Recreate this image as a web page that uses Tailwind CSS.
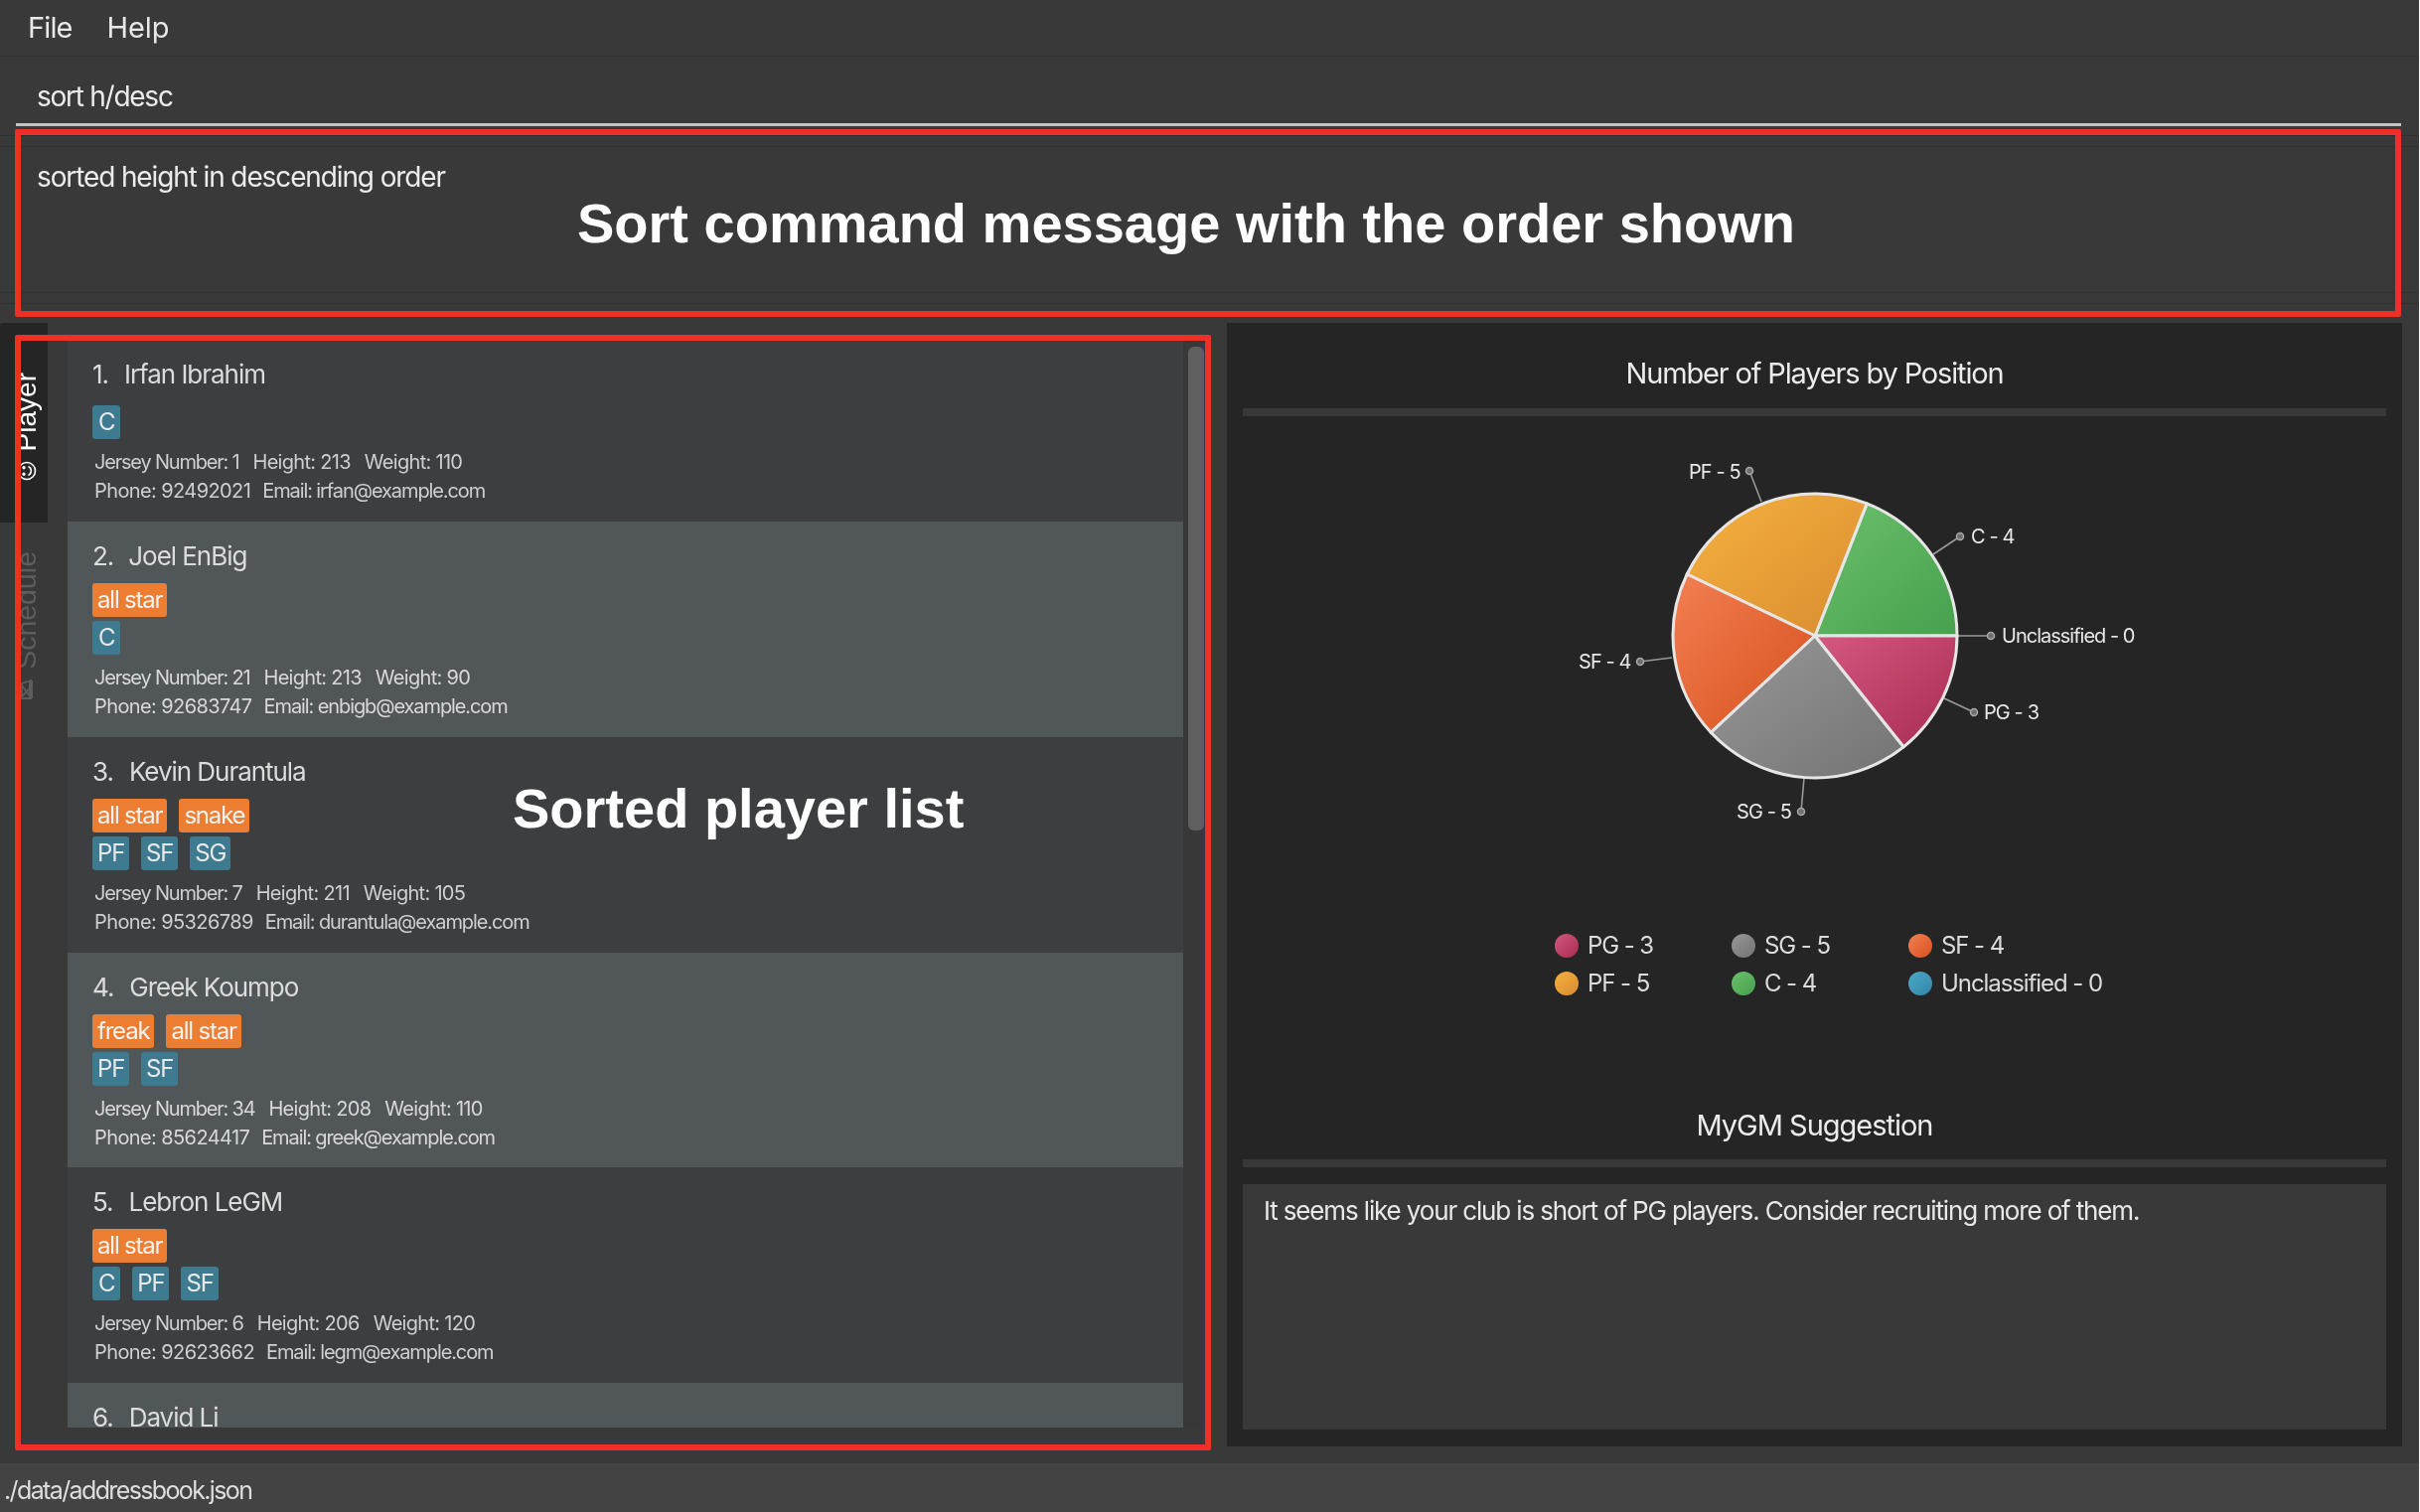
<!DOCTYPE html>
<html lang="en">
<head>
<meta charset="utf-8">
<title>MyGM</title>
<script src="https://cdn.jsdelivr.net/npm/@tailwindcss/browser@4"></script>
</head>
<body class="bg-white overflow-hidden w-[2436px] h-[1522px] relative font-['Inter',sans-serif]">
<div class="w-[2435px] h-[1522px] bg-[#393939] flex flex-col blur-[0.6px]">

  <!-- menu -->
  <div class="h-[57px] shrink-0 border-b border-[#333333] flex items-center pl-[28px] gap-[35px] text-[29px] tracking-[-0.03em] text-[#e8e8e8]">
    <span>File</span><span class="tracking-[-0.005em]">Help</span>
  </div>

  <!-- command -->
  <div class="h-[80px] shrink-0 border-b border-[#303030] px-[16px] pt-[19px] text-[#ececec]">
    <div class="w-[2401px] h-[51px] border-b-[3px] border-[#c4c4c4] pl-[21px] text-[28px] leading-[42px] tracking-[-0.045em]">sort h/desc</div>
  </div>

  <!-- result -->
  <div class="h-[169px] shrink-0 border-b border-[#303030] pt-[10px]">
    <div class="h-[148px] border-y border-[#313131] pl-[37px] pt-[10px] text-[28px] leading-[40px] tracking-[-0.04em] text-[#ececec]">sorted height in descending order</div>
  </div>

  <!-- main row -->
  <div class="h-[1131px] mt-[19px] shrink-0 flex">
    <!-- tabs -->
    <div class="w-[48px] shrink-0 flex flex-col">
      <div class="h-[201px] bg-[#252525] rounded-tl-[3px] flex flex-col items-center pl-[6px] pt-[50px] gap-[10px] text-white">
        <span class="[writing-mode:vertical-rl] rotate-180 font-['Liberation_Sans',sans-serif] text-[28px] leading-[28px]">Player</span>
        <svg class="w-[20px] h-[20px]" viewBox="0 0 20 20" fill="none" stroke="currentColor" stroke-width="1.6"><circle cx="10" cy="10" r="8.5"/><circle cx="7" cy="6.8" r="0.9" fill="currentColor"/><circle cx="7" cy="13.2" r="0.9" fill="currentColor"/><path d="M11.5 5.5a5 5 0 0 1 0 9"/></svg>
      </div>
      <div class="flex flex-col items-center pl-[4px] pt-[29px] gap-[9px] text-[#5d5d5d]">
        <span class="[writing-mode:vertical-rl] rotate-180 font-['Liberation_Sans',sans-serif] text-[28.5px] leading-[28px]">Schedule</span>
        <svg class="w-[16px] h-[24px]" viewBox="0 0 16 24" fill="none" stroke="currentColor" stroke-width="1.8"><path d="M13 2L4 5v15h9z"/><path d="M13 2v18" stroke-width="4"/><path d="M4 7l8 11M4 18l8-8"/></svg>
      </div>
    </div>

    <!-- list -->
    <div class="ml-[20px] mt-[17px] h-[1095px] flex shrink-0">
      <div class="w-[1123px] h-[1095px] overflow-hidden text-[#dcdcdc]">

        <div class="h-[183px] bg-[#3c3e3f] pl-[25px] pt-[17px]">
          <div class="h-[36px] leading-[36px] text-[26px] tracking-[-0.04em] flex gap-[16px]"><span>1.</span><span>Irfan Ibrahim</span></div>
          <div class="mt-[13px] flex gap-[12px]"><span class="h-[34px] px-[6px] rounded-[3px] bg-[#3e7b91] text-[#e8e8e8] text-[24px] leading-[34px] tracking-[-0.05em]">C</span></div>
          <div class="mt-[9px] pl-[2px] flex gap-[14px] h-[29px] leading-[29px] text-[20px] tracking-[-0.035em] text-[#cfcfcf]"><span class="tracking-[-0.06em]">Jersey Number: 1</span><span>Height: 213</span><span>Weight: 110</span></div>
          <div class="pl-[2px] flex gap-[12px] h-[29px] leading-[29px] text-[20px] tracking-[-0.055em] text-[#cfcfcf]"><span class="tracking-[-0.03em]">Phone: 92492021</span><span>Email: irfan@example.com</span></div>
        </div>

        <div class="h-[217px] bg-[#515658] pl-[25px] pt-[17px]">
          <div class="h-[36px] leading-[36px] text-[26px] tracking-[-0.04em] flex gap-[15px]"><span>2.</span><span>Joel EnBig</span></div>
          <div class="mt-[9px] flex gap-[12px]"><span class="h-[34px] px-[5px] rounded-[3px] bg-[#ed7d31] text-[#f3f3f3] text-[24px] leading-[34px] tracking-[-0.05em]">all star</span></div>
          <div class="mt-[4px] flex gap-[12px]"><span class="h-[34px] px-[6px] rounded-[3px] bg-[#3e7b91] text-[#e8e8e8] text-[24px] leading-[34px] tracking-[-0.05em]">C</span></div>
          <div class="mt-[9px] pl-[2px] flex gap-[14px] h-[29px] leading-[29px] text-[20px] tracking-[-0.035em] text-[#d8d8d8]"><span class="tracking-[-0.06em]">Jersey Number: 21</span><span>Height: 213</span><span>Weight: 90</span></div>
          <div class="pl-[2px] flex gap-[12px] h-[29px] leading-[29px] text-[20px] tracking-[-0.055em] text-[#d8d8d8]"><span class="tracking-[-0.03em]">Phone: 92683747</span><span>Email: enbigb@example.com</span></div>
        </div>

        <div class="h-[217px] bg-[#3c3e3f] pl-[25px] pt-[17px]">
          <div class="h-[36px] leading-[36px] text-[26px] tracking-[-0.04em] flex gap-[16px]"><span>3.</span><span>Kevin Durantula</span></div>
          <div class="mt-[9px] flex gap-[12px]"><span class="h-[34px] px-[5px] rounded-[3px] bg-[#ed7d31] text-[#f3f3f3] text-[24px] leading-[34px] tracking-[-0.05em]">all star</span><span class="h-[34px] px-[5px] rounded-[3px] bg-[#ed7d31] text-[#f3f3f3] text-[24px] leading-[34px] tracking-[-0.05em]">snake</span></div>
          <div class="mt-[4px] flex gap-[12px]"><span class="h-[34px] px-[5px] rounded-[3px] bg-[#3e7b91] text-[#e8e8e8] text-[24px] leading-[34px] tracking-[-0.05em]">PF</span><span class="h-[34px] px-[5px] rounded-[3px] bg-[#3e7b91] text-[#e8e8e8] text-[24px] leading-[34px] tracking-[-0.05em]">SF</span><span class="h-[34px] px-[5px] rounded-[3px] bg-[#3e7b91] text-[#e8e8e8] text-[24px] leading-[34px] tracking-[-0.05em]">SG</span></div>
          <div class="mt-[9px] pl-[2px] flex gap-[14px] h-[29px] leading-[29px] text-[20px] tracking-[-0.035em] text-[#cfcfcf]"><span class="tracking-[-0.06em]">Jersey Number: 7</span><span>Height: 211</span><span>Weight: 105</span></div>
          <div class="pl-[2px] flex gap-[12px] h-[29px] leading-[29px] text-[20px] tracking-[-0.055em] text-[#cfcfcf]"><span class="tracking-[-0.03em]">Phone: 95326789</span><span>Email: durantula@example.com</span></div>
        </div>

        <div class="h-[216px] bg-[#515658] pl-[25px] pt-[17px]">
          <div class="h-[36px] leading-[36px] text-[26px] tracking-[-0.04em] flex gap-[16px]"><span>4.</span><span>Greek Koumpo</span></div>
          <div class="mt-[9px] flex gap-[12px]"><span class="h-[34px] px-[5px] rounded-[3px] bg-[#ed7d31] text-[#f3f3f3] text-[24px] leading-[34px] tracking-[-0.05em]">freak</span><span class="h-[34px] px-[5px] rounded-[3px] bg-[#ed7d31] text-[#f3f3f3] text-[24px] leading-[34px] tracking-[-0.05em]">all star</span></div>
          <div class="mt-[4px] flex gap-[12px]"><span class="h-[34px] px-[5px] rounded-[3px] bg-[#3e7b91] text-[#e8e8e8] text-[24px] leading-[34px] tracking-[-0.05em]">PF</span><span class="h-[34px] px-[5px] rounded-[3px] bg-[#3e7b91] text-[#e8e8e8] text-[24px] leading-[34px] tracking-[-0.05em]">SF</span></div>
          <div class="mt-[9px] pl-[2px] flex gap-[14px] h-[29px] leading-[29px] text-[20px] tracking-[-0.035em] text-[#d8d8d8]"><span class="tracking-[-0.06em]">Jersey Number: 34</span><span>Height: 208</span><span>Weight: 110</span></div>
          <div class="pl-[2px] flex gap-[12px] h-[29px] leading-[29px] text-[20px] tracking-[-0.055em] text-[#d8d8d8]"><span class="tracking-[-0.03em]">Phone: 85624417</span><span>Email: greek@example.com</span></div>
        </div>

        <div class="h-[217px] bg-[#3c3e3f] pl-[25px] pt-[17px]">
          <div class="h-[36px] leading-[36px] text-[26px] tracking-[-0.04em] flex gap-[16px]"><span>5.</span><span>Lebron LeGM</span></div>
          <div class="mt-[9px] flex gap-[12px]"><span class="h-[34px] px-[5px] rounded-[3px] bg-[#ed7d31] text-[#f3f3f3] text-[24px] leading-[34px] tracking-[-0.05em]">all star</span></div>
          <div class="mt-[4px] flex gap-[12px]"><span class="h-[34px] px-[6px] rounded-[3px] bg-[#3e7b91] text-[#e8e8e8] text-[24px] leading-[34px] tracking-[-0.05em]">C</span><span class="h-[34px] px-[5px] rounded-[3px] bg-[#3e7b91] text-[#e8e8e8] text-[24px] leading-[34px] tracking-[-0.05em]">PF</span><span class="h-[34px] px-[5px] rounded-[3px] bg-[#3e7b91] text-[#e8e8e8] text-[24px] leading-[34px] tracking-[-0.05em]">SF</span></div>
          <div class="mt-[9px] pl-[2px] flex gap-[14px] h-[29px] leading-[29px] text-[20px] tracking-[-0.035em] text-[#cfcfcf]"><span class="tracking-[-0.06em]">Jersey Number: 6</span><span>Height: 206</span><span>Weight: 120</span></div>
          <div class="pl-[2px] flex gap-[12px] h-[29px] leading-[29px] text-[20px] tracking-[-0.055em] text-[#cfcfcf]"><span class="tracking-[-0.03em]">Phone: 92623662</span><span>Email: legm@example.com</span></div>
        </div>

        <div class="h-[217px] bg-[#515658] pl-[25px] pt-[17px]">
          <div class="h-[36px] leading-[36px] text-[26px] tracking-[-0.04em] flex gap-[16px]"><span>6.</span><span>David Li</span></div>
        </div>
      </div>
      <div class="w-[23px] h-[1095px] pl-[5px] pt-[7px] bg-[#383838]">
        <div class="w-[16px] h-[487px] rounded-[6px] bg-[#5f5f5f]"></div>
      </div>
    </div>

    <!-- right pane -->
    <div class="ml-[21px] w-[1183px] h-[1131px] shrink-0 bg-[#252525] px-[16px] text-[#ececec] flex flex-col">
      <div class="h-[86px] shrink-0 pt-[16px] flex items-center justify-center text-[29px] tracking-[-0.04em]">Number of Players by Position</div>
      <div class="h-[8px] shrink-0 bg-[#383838]"></div>

      <svg class="w-[1151px] h-[511px] shrink-0" viewBox="1251 419 1151 511" font-family="Inter, sans-serif" font-size="20" letter-spacing="-0.9" fill="#e8e8e8">
        <defs>
          <linearGradient id="gc" x1="0" y1="0" x2="1" y2="1"><stop offset="0" stop-color="#6cc06c"/><stop offset="1" stop-color="#46a04d"/></linearGradient>
          <linearGradient id="gpf" x1="0" y1="0" x2="1" y2="1"><stop offset="0" stop-color="#f5b13f"/><stop offset="1" stop-color="#d98c30"/></linearGradient>
          <linearGradient id="gsf" x1="0" y1="0" x2="1" y2="1"><stop offset="0" stop-color="#f27f52"/><stop offset="1" stop-color="#d7501d"/></linearGradient>
          <linearGradient id="gsg" x1="0" y1="0" x2="1" y2="1"><stop offset="0" stop-color="#989898"/><stop offset="1" stop-color="#737373"/></linearGradient>
          <linearGradient id="gpg" x1="0" y1="0" x2="1" y2="1"><stop offset="0" stop-color="#d4587f"/><stop offset="1" stop-color="#a82b52"/></linearGradient>
        </defs>
        <g stroke="#999999" stroke-width="1.6" fill="none">
          <path d="M1773 505L1761 474M1946 558L1973 540M1970 640H2004M1957 703L1987 717M1816 783L1813 817M1683 662L1651 666"/>
        </g>
        <g fill="#6f6f6f" stroke="#a8a8a8" stroke-width="1.5">
          <circle cx="1761" cy="474" r="3.5"/><circle cx="1973" cy="540" r="3.5"/><circle cx="2004" cy="640" r="3.5"/><circle cx="1987" cy="717" r="3.5"/><circle cx="1813" cy="817" r="3.5"/><circle cx="1651" cy="666" r="3.5"/>
        </g>
        <g stroke="#e6e6e6" stroke-width="3" stroke-linejoin="round">
          <path fill="url(#gc)" d="M1827 640L1970 640A143 143 0 0 0 1879.2 506.9Z"/>
          <path fill="url(#gpf)" d="M1827 640L1879.2 506.9A143 143 0 0 0 1698.2 578Z"/>
          <path fill="url(#gsf)" d="M1827 640L1698.2 578A143 143 0 0 0 1722.2 737.3Z"/>
          <path fill="url(#gsg)" d="M1827 640L1722.2 737.3A143 143 0 0 0 1916.2 751.8Z"/>
          <path fill="url(#gpg)" d="M1827 640L1916.2 751.8A143 143 0 0 0 1970 640Z"/>
        </g>
        <text x="1700" y="482">PF - 5</text>
        <text x="1984" y="547">C - 4</text>
        <text x="2015" y="647" letter-spacing="-1">Unclassified - 0</text>
        <text x="1997" y="724">PG - 3</text>
        <text x="1748" y="824">SG - 5</text>
        <text x="1589" y="673">SF - 4</text>
      </svg>

      <div class="h-[77px] shrink-0 ml-[314px] mt-[3px] grid grid-cols-[178px_178px_auto] auto-rows-[38px] text-[24px] tracking-[-0.045em] text-[#dcdcdc]">
        <div class="flex items-center gap-[9px]"><span class="w-[24px] h-[24px] rounded-full bg-gradient-to-br from-[#d4587f] to-[#a82b52]"></span>PG - 3</div>
        <div class="flex items-center gap-[9px]"><span class="w-[24px] h-[24px] rounded-full bg-gradient-to-br from-[#989898] to-[#737373]"></span>SG - 5</div>
        <div class="flex items-center gap-[9px]"><span class="w-[24px] h-[24px] rounded-full bg-gradient-to-br from-[#f27f52] to-[#d7501d]"></span>SF - 4</div>
        <div class="flex items-center gap-[9px]"><span class="w-[24px] h-[24px] rounded-full bg-gradient-to-br from-[#f5b13f] to-[#d98c30]"></span>PF - 5</div>
        <div class="flex items-center gap-[9px]"><span class="w-[24px] h-[24px] rounded-full bg-gradient-to-br from-[#6cc06c] to-[#46a04d]"></span>C - 4</div>
        <div class="flex items-center gap-[9px]"><span class="w-[24px] h-[24px] rounded-full bg-gradient-to-br from-[#4fa8c8] to-[#2f86a8]"></span>Unclassified - 0</div>
      </div>

      <div class="h-[157px] shrink-0 pt-[89px] flex items-center justify-center text-[29px] tracking-[-0.035em]">MyGM Suggestion</div>
      <div class="h-[8px] shrink-0 bg-[#383838]"></div>
      <div class="h-[247px] mt-[17px] shrink-0 bg-[#393939] pl-[21px] pt-[8px] text-[26px] leading-[38px] tracking-[-0.044em] text-[#e8e8e8]">It seems like your club is short of PG players. Consider recruiting more of them.</div>
    </div>
  </div>

  <!-- status -->
  <div class="mt-[17px] h-[49px] shrink-0 bg-[#434343] pl-[4px] text-[25px] leading-[54px] tracking-[-0.065em] text-[#dedede]">./data/addressbook.json</div>
</div>

<!-- annotation overlay -->
<div class="absolute left-[15px] top-[130px] w-[2402px] h-[189px] border-[6px] border-[#ee3124] rounded-[2px]"></div>
<div class="absolute left-[15px] top-[337px] w-[1204px] h-[1123px] border-[6px] border-[#ee3124] rounded-[2px]"></div>
<div class="absolute left-[581px] top-[190px] h-[70px] leading-[70px] whitespace-nowrap font-['Liberation_Sans',sans-serif] font-bold text-[56px] text-white">Sort command message with the order shown</div>
<div class="absolute left-[516px] top-[779px] h-[70px] leading-[70px] whitespace-nowrap font-['Liberation_Sans',sans-serif] font-bold text-[56px] text-white">Sorted player list</div>
</body>
</html>
